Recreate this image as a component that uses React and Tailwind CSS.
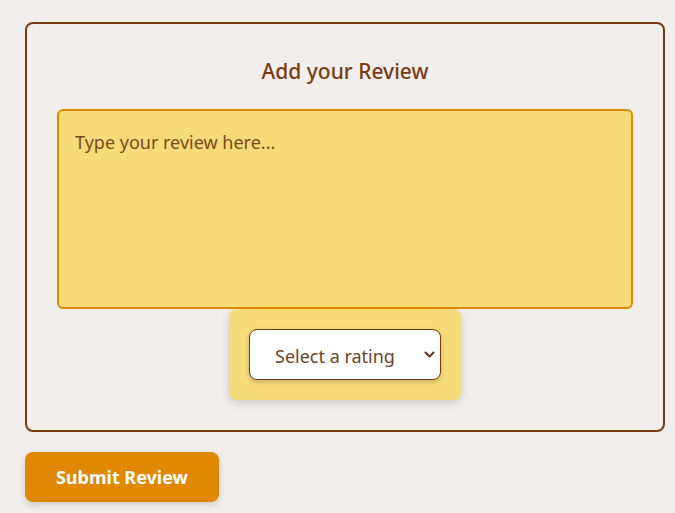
import React, { useState } from 'react'

export default function App() {
  const [review, setReview] = useState('')
  const [rating, setRating] = useState('')

  return (
    <div className="min-h-screen bg-[#f2eeeb] pt-[22px] pl-[25px] font-['Noto_Sans','Open_Sans',sans-serif]">
      <form className="w-[640px]" onSubmit={(e) => e.preventDefault()}>
        <div className="flex flex-col items-center rounded-[8px] border-2 border-[#7a3b12] px-[30px] pt-[33px] pb-[30px]">
          <h2 className="mb-[24px] text-[21px] font-medium leading-[28px] text-[#7a3b12]">Add your Review</h2>

          <textarea
            value={review}
            onChange={(e) => setReview(e.target.value)}
            placeholder="Type your review here..."
            className="block h-[200px] w-full resize-none rounded-[6px] border-2 border-[#e08a00] bg-[#f5dc78] px-[16px] py-[19px] text-[18px] leading-[24px] text-[#6b3a14] outline-none placeholder:text-[#7a4a1c]"
          />

          <div className="rounded-[8px] bg-[#f5dc78] p-[20px] shadow-[0_3px_8px_rgba(0,0,0,0.15)]">
            <div className="relative">
              <select
                value={rating}
                onChange={(e) => setRating(e.target.value)}
                className="block h-[51px] w-[192px] appearance-none rounded-[8px] border border-[#7a3b12] bg-white pt-[3px] pl-[25px] pr-[30px] text-[18px] text-[#6b4528] shadow-[0_2px_4px_rgba(0,0,0,0.2)] outline-none"
              >
                <option value="">Select a rating</option>
                <option value="5">5 - Excellent</option>
                <option value="4">4 - Good</option>
                <option value="3">3 - Average</option>
                <option value="2">2 - Poor</option>
                <option value="1">1 - Terrible</option>
              </select>
              <svg
                className="pointer-events-none absolute right-[6px] top-[22px]"
                width="11"
                height="8"
                viewBox="0 0 11 8"
                fill="none"
              >
                <path d="M1.5 1.5 L5.5 5.5 L9.5 1.5" stroke="#5a3418" strokeWidth="2" strokeLinecap="round" strokeLinejoin="round" />
              </svg>
            </div>
          </div>
        </div>

        <button
          type="submit"
          className="mt-[20px] h-[50px] w-[194px] rounded-[8px] bg-[#e08800] text-[18px] font-bold text-white shadow-[0_3px_6px_rgba(0,0,0,0.15)]"
        >
          Submit Review
        </button>
      </form>
    </div>
  )
}
